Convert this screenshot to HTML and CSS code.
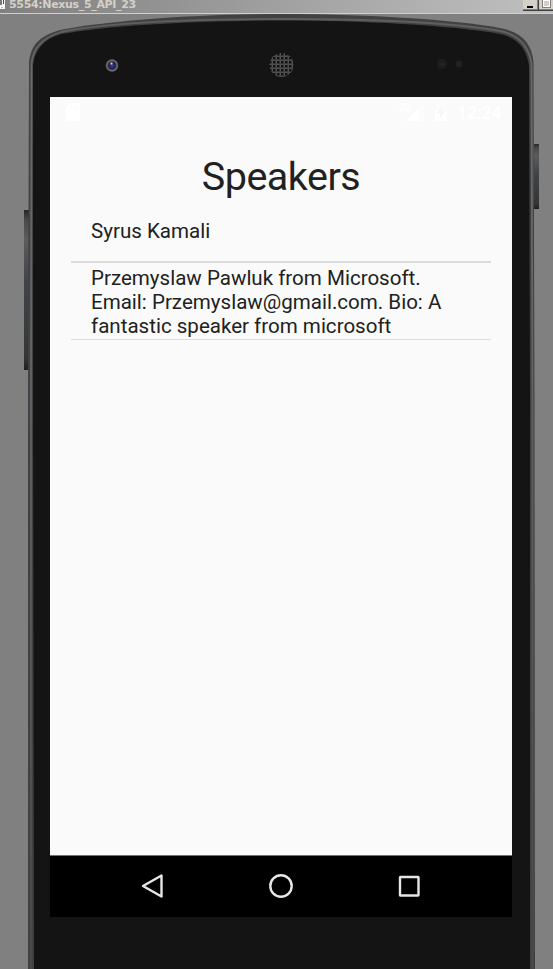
FILE: index.html
```html
<!DOCTYPE html>
<html lang="en">
<head>
<meta charset="utf-8">
<title>5554:Nexus_5_API_23</title>
<link rel="stylesheet" href="styles.css">
</head>
<body>
<div class="window">
  <header class="titlebar">
    <svg class="app-icon" width="6" height="10" viewBox="0 0 6 10"><path d="M0 0H5V9H0Z" fill="#f4f4f4"/><path d="M0 0H2V5H0Z" fill="#777"/><path d="M3 0H4V4H3Z" fill="#28559a"/><path d="M1 7H3V8H1Z" fill="#bbb"/></svg>
    <span class="title">5554:Nexus_5_API_23</span>
    <div class="controls">
      <span class="control"><i class="minimize"></i></span>
      <span class="control"><i class="maximize"></i></span>
    </div>
  </header>
  <main class="stage">
    <svg class="shell" width="553" height="955" viewBox="0 14 553 955">
      <defs>
        <linearGradient id="key" x1="0" y1="0" x2="0" y2="1"><stop offset="0" stop-color="#262626"/><stop offset=".06" stop-color="#484848"/><stop offset=".18" stop-color="#5c5c5c"/><stop offset=".45" stop-color="#414446"/><stop offset=".92" stop-color="#353535"/><stop offset="1" stop-color="#202020"/></linearGradient>
        <linearGradient id="rim" x1="0" y1="0" x2="0" y2="1"><stop offset="0" stop-color="#5c5e5f"/><stop offset=".06" stop-color="#68696c"/><stop offset=".4" stop-color="#626366"/><stop offset="1" stop-color="#484949"/></linearGradient>
        <pattern id="mesh" width="4" height="4" patternUnits="userSpaceOnUse" patternTransform="translate(1 1)"><rect width="4" height="4" fill="#555"/><rect width="2.500" height="2.500" fill="#111"/><rect x="2.500" y="2.500" width="1" height="1" fill="#222"/></pattern>
        <radialGradient id="lens"><stop offset="0" stop-color="#4545b0"/><stop offset=".35" stop-color="#222268"/><stop offset=".6" stop-color="#30303c"/><stop offset=".8" stop-color="#77777a"/><stop offset="1" stop-color="#333"/></radialGradient>
      </defs>
      <rect x="24" y="210" width="6" height="160" fill="url(#key)"/>
      <rect x="534" y="144" width="5" height="65" fill="url(#key)"/>
      <path d="M28 975V400L29 62C31 45 39 36 60 30C110 20 200 14 281 14C360 14 450 19 500 28C522 32 532 44 533.500 62L534.500 400L535 975Z" fill="#404142"/>
      <path d="M31 975V400L31.500 64C33 47 43 38 61 32C110 22 200 19 281 19C360 19 450 22 500 31C520 35 529 47 531.500 64L532.500 400V975" fill="none" stroke="url(#rim)" stroke-width="1.800"/>
      <path d="M34 975L33 400V66C34 50 44 39 61 34C110 25 200 20.500 281 20.500C360 20.500 450 25 500 34C519 38 527 50 529 66L530 400V975Z" fill="#141414"/>
      <circle cx="112" cy="65.500" r="6.500" fill="url(#lens)"/>
      <path d="M110.500 62.500h2v2h-2z" fill="#c6c6ee"/>
      <circle cx="281.500" cy="65" r="12" fill="url(#mesh)"/>
      <circle cx="442" cy="64" r="5" fill="#1e1e1e"/><circle cx="442.500" cy="64.500" r="1.200" fill="#3a2525"/>
      <circle cx="459" cy="64" r="3.500" fill="#212121"/><circle cx="459" cy="64" r="1" fill="#332626"/>
    </svg>
    <section class="screen">
      <div class="statusbar">
        <svg class="sd" width="16" height="20" viewBox="0 0 16 20"><path d="M5 0H13Q15 0 15 2V16Q15 18 13 18H3Q1 18 1 16V5Z" fill="#fff"/><path d="M6 2h1v4h-1zM9 2h1v4h-1zM12 2h1v4h-1z" fill="#fafafa"/></svg>
        <span class="network">3G</span>
        <svg class="signal" width="18" height="18" viewBox="0 0 18 18"><path d="M0 18L18 0V18Z" fill="#fcfcfc"/><path d="M0 18L13 5V18Z" fill="#fff"/></svg>
        <svg class="battery" width="12" height="19" viewBox="0 0 12 19"><path d="M0 2H3V0H9V2H12V9H0Z" fill="#fcfcfc"/><path d="M0 9H12V19H0Z" fill="#fff"/><path d="M7 4L2 11H5V16L10 9H7Z" fill="#f6f6f6"/></svg>
        <span class="clock">12:24</span>
      </div>
      <div class="content">
        <h1>Speakers</h1>
        <ul class="speakers">
          <li class="speaker">Syrus Kamali</li>
          <li class="speaker long">Przemyslaw Pawluk from Microsoft.<br>Email: Przemyslaw@gmail.com. Bio: A<br>fantastic speaker from microsoft</li>
        </ul>
      </div>
      <nav class="navbar">
        <svg width="24" height="26" viewBox="0 0 24 26"><path d="M21.500 2.500V23.500L3 13Z"/></svg>
        <svg width="26" height="26" viewBox="0 0 26 26"><circle cx="13" cy="13" r="10.700"/></svg>
        <svg width="24" height="26" viewBox="0 0 24 26"><rect x="3" y="4" width="18.500" height="18.500" rx=".5"/></svg>
      </nav>
    </section>
  </main>
</div>
</body>
</html>
```
FILE: styles.css
```css
* { box-sizing: border-box; }
body { margin: 0; background: #808080; font-family: Roboto, sans-serif; }
.window { width: 553px; height: 969px; display: flex; flex-direction: column; overflow: hidden; }
.titlebar { height: 14px; flex: none; display: flex; align-items: flex-start; background: linear-gradient(90deg, #808080, #c0c0c0); border-bottom: 1px solid #d4d0c8; }
.app-icon { margin-right: 3px; flex: none; }
.title { font: bold 11px/9px "DejaVu Sans", sans-serif; letter-spacing: -0.34px; color: #d4d0c8; white-space: nowrap; }
.controls { display: flex; margin-left: auto; margin-right: -2px; }
.control { width: 16px; height: 11px; background: #d4d0c8; border-right: 1px solid #404040; border-bottom: 1px solid #404040; box-shadow: inset -1px -1px #808080; display: flex; }
.minimize { width: 6px; height: 2px; margin: 6px 0 0 4px; background: #000; }
.maximize { width: 9px; height: 9px; margin: -1px 0 0 3px; border: 1px solid #808080; box-shadow: inset 0 0 0 1px #fff; }
.stage { position: relative; flex: 1; padding: 83px 41px 52px 50px; }
.shell { position: absolute; inset: 0; }
.screen { position: relative; width: 462px; height: 820px; background: #fafafa; display: flex; flex-direction: column; }
.statusbar { height: 31px; flex: none; display: flex; align-items: flex-start; color: #fff; padding: 6px 10px 0 15px; }
.network { margin-left: auto; font-size: 10px; line-height: 10px; font-weight: 700; }
.signal { margin-left: -5px; }
.battery { margin-left: 11px; margin-top: -1px; }
.clock { width: 45px; margin-left: 10px; font-size: 17.5px; line-height: 20px; font-weight: 500; }
.content { flex: 1; padding: 24px 21px 0; color: #212121; }
h1 { margin: 0; height: 57px; font-size: 39.5px; line-height: 49px; font-weight: 400; letter-spacing: -0.5px; text-align: center; }
.speakers { list-style: none; margin: 0; padding: 0; }
.speaker { height: 54px; padding: 10px 20px 0; font-size: 20.55px; line-height: 24.3px; border-bottom: 2px solid #dcdcdc; white-space: nowrap; }
.long { height: 77px; padding-top: 2.7px; border-bottom-width: 1px; }
.navbar { height: 62px; flex: none; display: flex; align-items: center; justify-content: space-between; padding: 0 91px 2px 90px; background: #000; border-top: 1px solid #6b7472; }
.navbar svg { fill: none; stroke: #e6e6e6; stroke-width: 2.4; stroke-linejoin: round; }
```
